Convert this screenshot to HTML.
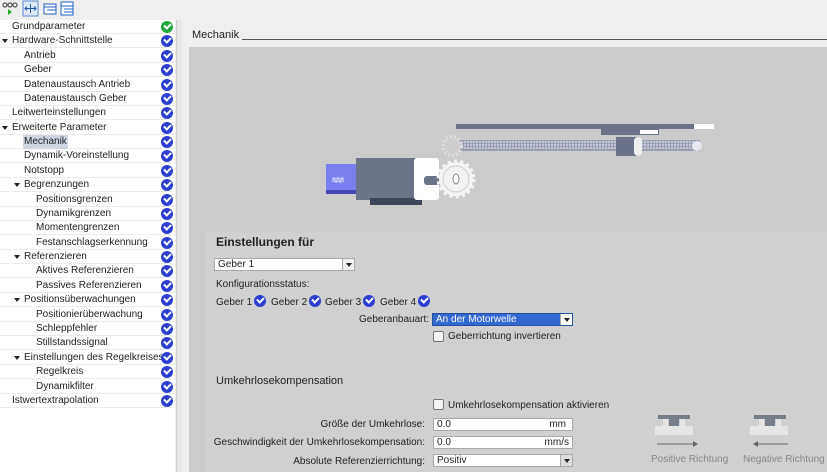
<!DOCTYPE html>
<html><head><meta charset="utf-8"><style>
*{margin:0;padding:0;box-sizing:border-box}
body{width:827px;height:472px;overflow:hidden;background:#efefef;font-family:"Liberation Sans",sans-serif;font-size:10px;color:#222;position:relative}
.a{position:absolute;white-space:nowrap}
.row{position:absolute;left:0;width:175px;height:14px;line-height:14px;border-bottom:1px solid #ececec}
.row span{position:absolute}
.ck{position:absolute;left:161px;width:12px;height:12px;border-radius:50%;background:#2c3fd0;top:1px}
.ck:after{content:"";position:absolute;left:3px;top:2px;width:5px;height:3px;border-left:2px solid #fff;border-bottom:2px solid #fff;transform:rotate(-45deg)}
.ck.g{background:#22a83a}
.tri{position:absolute;width:0;height:0;border-left:3.5px solid transparent;border-right:3.5px solid transparent;border-top:4px solid #222;top:5px}
.sck{display:inline-block;position:relative;width:12px;height:12px;border-radius:50%;background:#2c3fd0;vertical-align:-2px;margin-left:2px}
.sck:after{content:"";position:absolute;left:3px;top:2px;width:5px;height:3px;border-left:2px solid #fff;border-bottom:2px solid #fff;transform:rotate(-45deg)}
.inp{position:absolute;background:#fff;border:1px solid #a8a8a8;height:13px;line-height:12px;padding-left:3px}
.dd{position:absolute;right:0;top:0;width:12px;height:11px;background:#f0f0f0;border-left:1px solid #aaa}
.dd:after{content:"";position:absolute;left:3px;top:4px;border-left:3px solid transparent;border-right:3px solid transparent;border-top:4px solid #222}
.cb{position:absolute;width:11px;height:11px;background:#f4f4f4;border:1px solid #777;border-radius:2px}
</style></head><body>
<div class="a" style="left:0;top:0;width:188px;height:20px;background:#efefef"></div>
<svg class="a" style="left:0;top:0" width="80" height="20">
<circle cx="5" cy="5" r="2" fill="none" stroke="#555" stroke-width="1.2"/><circle cx="10" cy="5" r="2" fill="none" stroke="#555" stroke-width="1.2"/><circle cx="15" cy="5" r="2" fill="none" stroke="#555" stroke-width="1.2"/>
<path d="M8 9 L12 12 L8 15Z" fill="#2a2"/>
<rect x="23" y="1" width="15" height="15" fill="#dce8f6" stroke="#5a8ad0"/>
<path d="M26 8.5h9M27 6.5l-2 2 2 2M34 6.5l2 2-2 2M30.5 4v9" stroke="#2050b0" fill="none"/>
<rect x="44" y="4" width="12" height="10" fill="#fff" stroke="#2060c0"/><path d="M44 7h12M47 10h9" stroke="#2060c0"/>
<rect x="61" y="2" width="12" height="13" fill="#fff" stroke="#2060c0"/><path d="M61 6h12M64 9h9M64 12h9" stroke="#2060c0"/>
</svg>
<div class="a" style="left:0;top:20px;width:175px;height:452px;background:#fff"></div>
<div class="a" style="left:176px;top:20px;width:6px;height:452px;background:#e6e6e6;border-left:1px solid #ccc"></div>
<div id="tree"></div>
<script>
var r=[["Grundparameter",0,0,1],["Hardware-Schnittstelle",0,1],["Antrieb",1],["Geber",1],["Datenaustausch Antrieb",1],["Datenaustausch Geber",1],["Leitwerteinstellungen",0],["Erweiterte Parameter",0,1],["Mechanik",1,0,0,1],["Dynamik-Voreinstellung",1],["Notstopp",1],["Begrenzungen",1,1],["Positionsgrenzen",2],["Dynamikgrenzen",2],["Momentengrenzen",2],["Festanschlagserkennung",2],["Referenzieren",1,1],["Aktives Referenzieren",2],["Passives Referenzieren",2],["Positionsüberwachungen",1,1],["Positionierüberwachung",2],["Schleppfehler",2],["Stillstandssignal",2],["Einstellungen des Regelkreises",1,1],["Regelkreis",2],["Dynamikfilter",2],["Istwertextrapolation",0]];
var h="";for(var i=0;i<r.length;i++){var x=r[i],t=20+i*14.38,lx=12+x[1]*12;
h+='<div class="row" style="top:'+t+'px">'+(x[2]?'<i class="tri" style="left:'+(lx-10)+'px"></i>':'')+'<span style="left:'+lx+'px;'+(x[4]?'background:#cdd6e2;padding:0 1px;left:'+(lx-1)+'px':'')+'">'+x[0]+'</span><i class="ck'+(x[3]?' g':'')+'"></i></div>';}
document.getElementById("tree").innerHTML=h;
</script>
<div class="a" style="left:192px;top:29px;font-size:11px">Mechanik</div>
<div class="a" style="left:242px;top:39px;width:585px;height:1px;background:#555"></div>
<div class="a" style="left:189px;top:47px;width:638px;height:425px;background:#cbcbcb"></div>
<div class="a" style="left:205px;top:232px;width:622px;height:240px;background:#d0d0d0"></div>
<svg class="a" style="left:300px;top:110px" width="420" height="100">
<rect x="156" y="14" width="238" height="5" fill="#6a7388"/><rect x="394" y="14" width="20" height="5" fill="#fff"/>
<rect x="301" y="19" width="58" height="6" fill="#6a7388"/><rect x="340" y="20" width="18" height="4" fill="#fff"/>
<rect x="152" y="30" width="248" height="11" fill="#9aa0b0"/>
<path d="M152 32h246M152 35h246M152 38h246" stroke="#eef" stroke-width="1" stroke-dasharray="2 1"/>
<circle cx="397" cy="36" r="5" fill="#e8e8f0"/>
<rect x="316" y="27" width="22" height="19" fill="#6a7388"/><rect x="334" y="27" width="8" height="19" rx="4" fill="#eee"/>
<circle cx="152" cy="36" r="9" fill="#ccc" stroke="#ddd" stroke-width="4" stroke-dasharray="2 2"/>
<rect x="26" y="54" width="30" height="29" fill="#7b7ef0"/><rect x="26" y="80" width="30" height="4" fill="#4448b0"/>
<path d="M33 72v-4h2v4h2v-4h2v4h2v-4h2v4" stroke="#fff" fill="none" stroke-width="0.8"/>
<rect x="56" y="48" width="60" height="42" fill="#6c7488"/><rect x="70" y="88" width="52" height="7" fill="#3d4558"/>
<rect x="114" y="48" width="25" height="42" rx="3" fill="#fff"/>
<rect x="124" y="66" width="22" height="9" rx="3" fill="#6c7488"/>
<circle cx="156" cy="69" r="17" fill="#f4f4f4" stroke="#f4f4f4" stroke-width="5" stroke-dasharray="3 3"/>
<circle cx="156" cy="69" r="13" fill="#f2f2f2" stroke="#ccc"/><ellipse cx="156" cy="69" rx="3" ry="5" fill="#fff" stroke="#888"/>
</svg>
<div class="a" style="left:216px;top:235px;font-size:12px;font-weight:bold;color:#222">Einstellungen für</div>
<div class="inp" style="left:214px;top:258px;width:141px">Geber 1<span class="dd"></span></div>
<div class="a" style="left:216px;top:279px">Konfigurationsstatus:</div>
<div class="a" style="left:216px;top:295px">Geber 1<span class="sck"></span></div>
<div class="a" style="left:271px;top:295px">Geber 2<span class="sck"></span></div>
<div class="a" style="left:325px;top:295px">Geber 3<span class="sck"></span></div>
<div class="a" style="left:380px;top:295px">Geber 4<span class="sck"></span></div>
<div class="a" style="left:359px;top:314px">Geberanbauart:</div>
<div class="inp" style="left:432px;top:313px;width:141px;background:#3168d0;color:#fff;border-color:#2050a0">An der Motorwelle<span class="dd" style="background:#fff"></span></div>
<div class="cb" style="left:433px;top:331px"></div>
<div class="a" style="left:448px;top:331px">Geberrichtung invertieren</div>
<div class="a" style="left:216px;top:375px;font-size:11px">Umkehrlosekompensation</div>
<div class="cb" style="left:433px;top:399px"></div>
<div class="a" style="left:448px;top:400px">Umkehrlosekompensation aktivieren</div>
<div class="a" style="right:402px;top:419px">Größe der Umkehrlose:</div>
<div class="inp" style="left:433px;top:418px;width:140px">0.0<span style="position:absolute;right:6px">mm</span></div>
<div class="a" style="right:402px;top:437px">Geschwindigkeit der Umkehrlosekompensation:</div>
<div class="inp" style="left:433px;top:436px;width:140px">0.0<span style="position:absolute;right:3px">mm/s</span></div>
<div class="a" style="right:402px;top:456px">Absolute Referenzierrichtung:</div>
<div class="inp" style="left:433px;top:454px;width:140px">Positiv<span class="dd" style="background:#ddd"></span></div>
<svg class="a" style="left:650px;top:410px" width="177" height="40">
<rect x="8" y="5" width="32" height="4" fill="#777e8c"/><rect x="19" y="9" width="10" height="7" fill="#777e8c"/>
<rect x="13" y="9" width="5" height="7" fill="#e6e6e6"/><rect x="30" y="9" width="5" height="7" fill="#e6e6e6"/><rect x="5" y="16" width="38" height="9" fill="#e6e6e6"/>
<path d="M7 34h40" stroke="#666"/><path d="M43 31l5 3-5 3z" fill="#666"/>
<rect x="104" y="5" width="32" height="4" fill="#777e8c"/><rect x="115" y="9" width="10" height="7" fill="#777e8c"/>
<rect x="109" y="9" width="5" height="7" fill="#e6e6e6"/><rect x="126" y="9" width="5" height="7" fill="#e6e6e6"/><rect x="100" y="16" width="38" height="9" fill="#e6e6e6"/>
<path d="M104 34h34" stroke="#666"/><path d="M108 31l-5 3 5 3z" fill="#666"/>
</svg>
<div class="a" style="left:651px;top:454px;color:#888">Positive Richtung</div>
<div class="a" style="left:743px;top:454px;color:#888">Negative Richtung</div>
</body></html>
